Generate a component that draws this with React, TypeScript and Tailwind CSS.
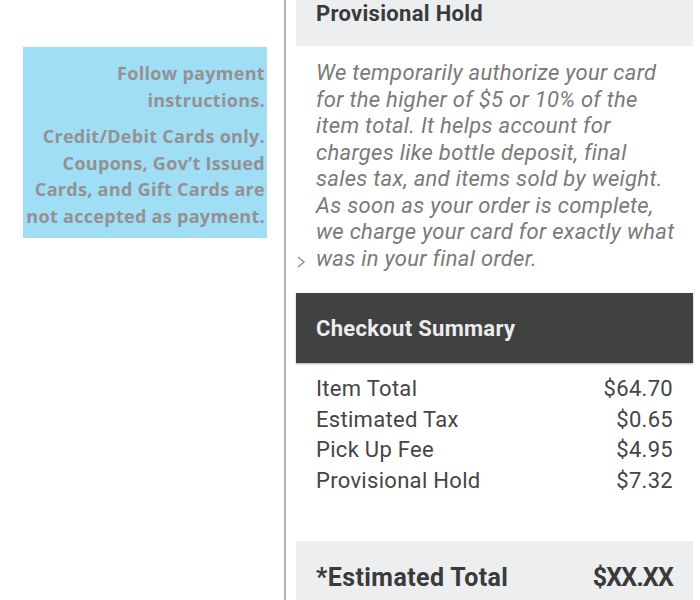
import React from "react";

const rows = [
  { label: "Item Total", value: "$64.70" },
  { label: "Estimated Tax", value: "$0.65" },
  { label: "Pick Up Fee", value: "$4.95" },
  { label: "Provisional Hold", value: "$7.32" },
];

const holdLines = [
  "We temporarily authorize your card",
  "for the higher of $5 or 10% of the",
  "item total. It helps account for",
  "charges like bottle deposit, final",
  "sales tax, and items sold by weight.",
  "As soon as your order is complete,",
  "we charge your card for exactly what",
  "was in your final order.",
];

export default function App() {
  return (
    <div className="w-[700px] h-[600px] overflow-hidden bg-white flex">
      {/* callout */}
      <div className="w-[284px] shrink-0 pl-[23px] pt-[47px]">
        <div
          className="w-[244px] h-[191px] bg-[#a0def6] pr-[2px] pt-[13px] text-right text-[#949193] font-bold text-[18px] leading-[26.5px] tracking-[0.3px] whitespace-nowrap"
          style={{ fontFamily: "'Open Sans', Lato, sans-serif" }}
        >
          <p>Follow payment<br />instructions.</p>
          <p className="mt-[10px]">
            Credit/Debit Cards only.<br />
            Coupons, Gov’t Issued<br />
            Cards, and Gift Cards are<br />
            not accepted as payment.
          </p>
        </div>
      </div>

      {/* divider */}
      <div className="w-[2px] shrink-0 bg-[#aab6c9]" />

      {/* phone panel */}
      <div
        className="relative ml-[10px] w-[397px] shrink-0 flex flex-col"
        style={{ fontFamily: "Roboto, 'Liberation Sans', sans-serif" }}
      >
        <div className="h-[46px] bg-[#eceef0] px-[20px]">
          <h2 className="text-[22px] leading-[27px] font-bold tracking-[0.3px] text-[#3a3a3a]">Provisional Hold</h2>
        </div>

        <p className="pt-[14px] px-[20px] italic text-[22px] leading-[26.5px] tracking-[0.3px] text-[#7a7a7a] whitespace-nowrap">
          {holdLines.map((l) => (
            <span key={l} className="block">{l}</span>
          ))}
        </p>

        <svg className="absolute left-[0px] top-[255px]" width="10" height="14" viewBox="0 0 10 14">
          <polyline points="2,2 8,7 2,12" fill="none" stroke="#8a8a8a" strokeWidth="1.4" />
        </svg>

        <div className="mt-[21px] h-[70px] bg-[#404141] shadow-[0_1px_2px_rgba(0,0,0,0.3)] px-[20px] flex items-center">
          <h2 className="text-[22px] font-bold tracking-[0.3px] text-[#ececec]">Checkout Summary</h2>
        </div>

        <div className="mt-[11px] px-[20px] text-[22px] leading-[30.5px] tracking-[0.3px] text-[#454545]">
          {rows.map((r) => (
            <div key={r.label} className="flex justify-between">
              <span>{r.label}</span>
              <span>{r.value}</span>
            </div>
          ))}
        </div>

        <div className="mt-[45px] flex-1 bg-[#eceef0] px-[20px] pt-[22px] flex justify-between text-[25px] leading-[30px] font-bold text-[#3a3a3a]">
          <span className="tracking-[0.4px]">*Estimated Total</span>
          <span className="tracking-[-0.8px]">$XX.XX</span>
        </div>
      </div>
    </div>
  );
}
